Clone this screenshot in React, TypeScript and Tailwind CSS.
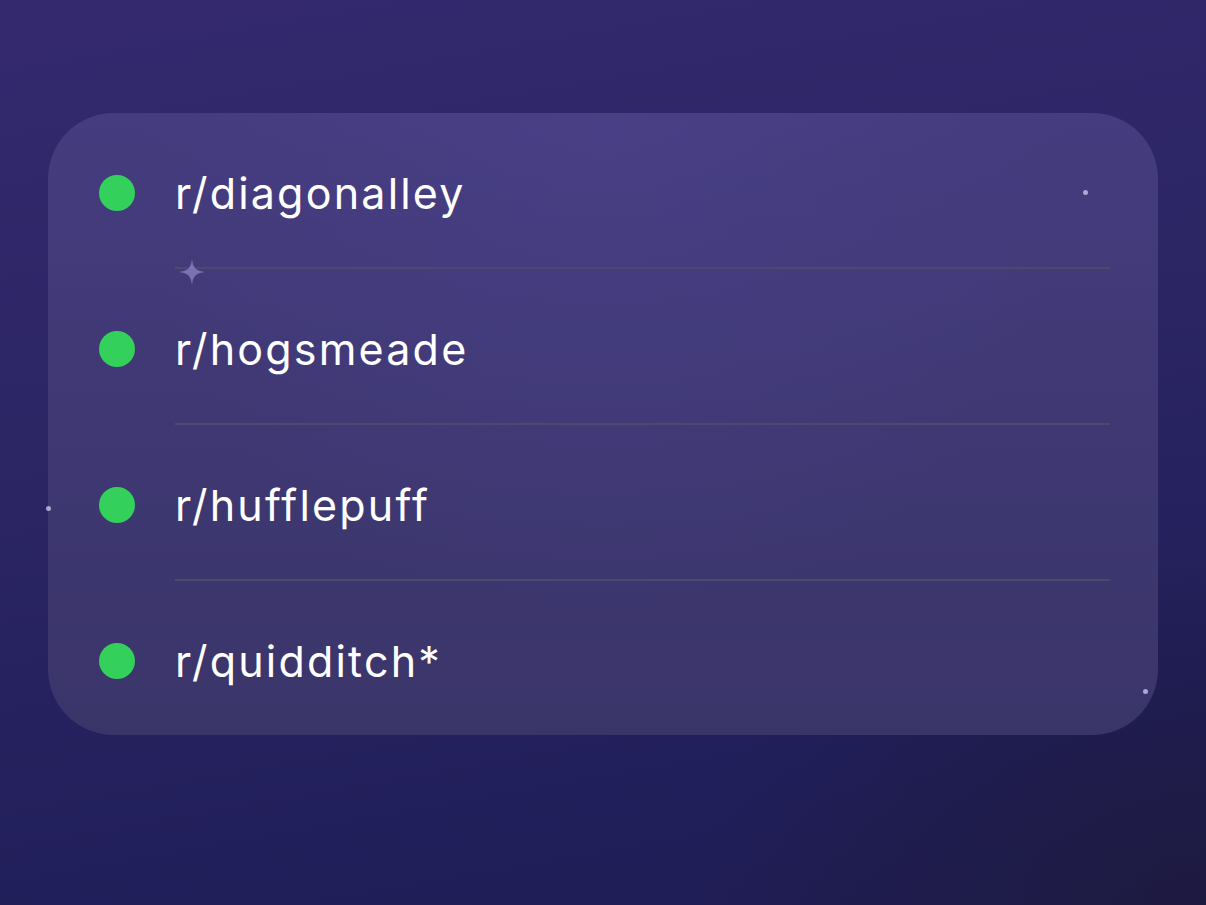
import type { JSX } from 'react';

const subs = ['r/diagonalley', 'r/hogsmeade', 'r/hufflepuff', 'r/quidditch*'];

function Sparkle(): JSX.Element {
  return (
    <svg
      width="28"
      height="28"
      viewBox="0 0 28 28"
      className="absolute left-[178px] top-[258px]"
    >
      <path
        d="M14 1 C15 10 18 13 27 14 C18 15 15 18 14 27 C13 18 10 15 1 14 C10 13 13 10 14 1 Z"
        fill="#8f86c9"
        fillOpacity="0.75"
      />
    </svg>
  );
}

function Star({ className }: { className: string }): JSX.Element {
  return <span className={`absolute h-[5px] w-[5px] rounded-full bg-[#c9c4ea] opacity-80 ${className}`} />;
}

export default function App(): JSX.Element {
  return (
    <div className="relative h-[905px] w-[1206px] overflow-hidden bg-[linear-gradient(170deg,#34296f_0%,#2b2563_45%,#211f5b_80%,#1f1d52_100%)] font-['Inter',sans-serif]">
      <div className="pointer-events-none absolute inset-0 bg-[radial-gradient(ellipse_at_100%_100%,rgba(28,24,56,0.7)_0%,rgba(28,24,56,0)_30%)]" />
      <div className="pt-[113px] pl-[48px]">
        <div className="relative w-[1110px] overflow-hidden rounded-[66px] bg-[linear-gradient(180deg,#453c7f_0%,#3f3873_50%,#3a3569_100%)]">
          <div className="pointer-events-none absolute inset-0 bg-[radial-gradient(ellipse_at_50%_0%,rgba(80,70,150,0.3)_0%,rgba(80,70,150,0)_60%)]" />
          <div className="relative flex flex-col">
            {subs.map((name, i) => (
              <div key={name} className="flex flex-col">
                <div className="mt-[6px] flex h-[148px] items-center pl-[51px]">
                  <span className="h-[36px] w-[36px] shrink-0 rounded-full bg-[#33d15b]" />
                  <span className="ml-[40px] text-[43px] leading-none tracking-[2.2px] text-white">{name}</span>
                </div>
                {i < subs.length - 1 && <div className="ml-[127px] mr-[48px] h-[2px] bg-[#4c4a6c]" />}
              </div>
            ))}
          </div>
        </div>
      </div>
      <Sparkle />
      <Star className="left-[1083px] top-[190px]" />
      <Star className="left-[46px] top-[506px]" />
      <Star className="left-[1143px] top-[689px]" />
    </div>
  );
}
